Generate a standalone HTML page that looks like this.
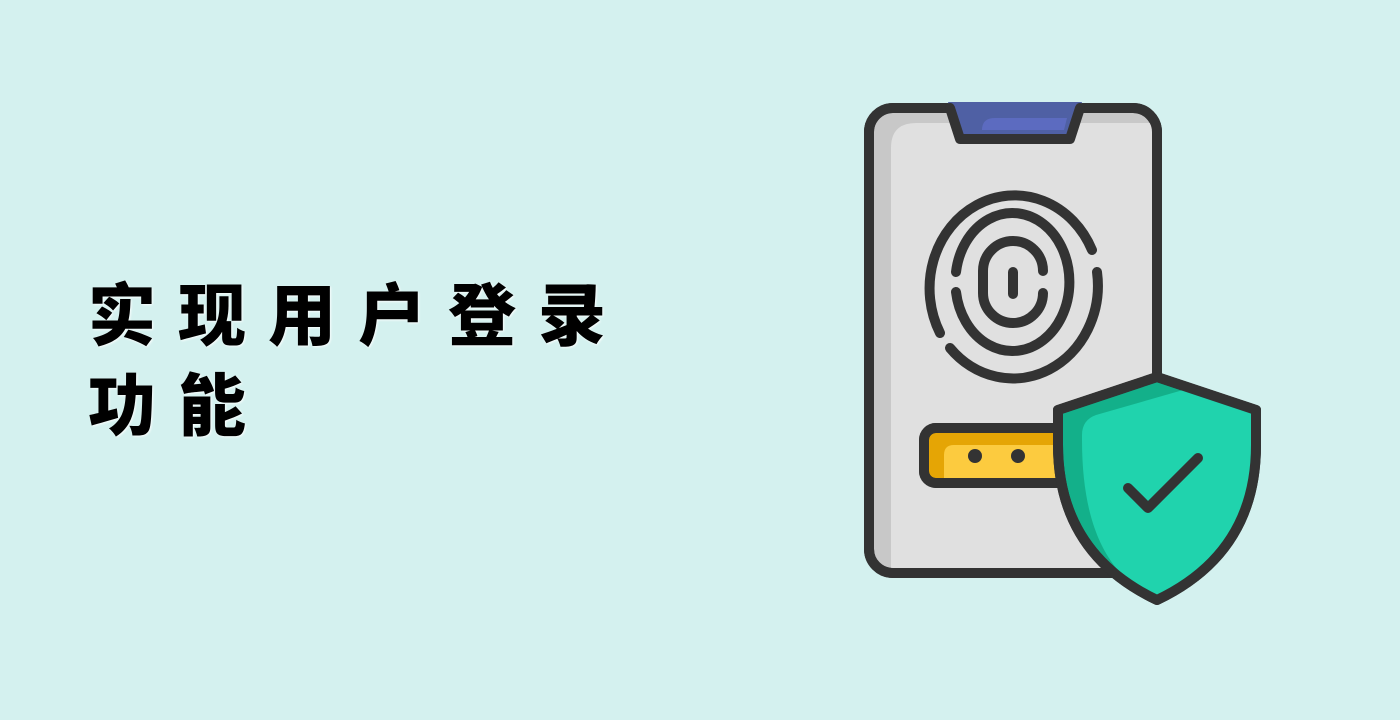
<!DOCTYPE html>
<html><head><meta charset="utf-8"><style>
html,body{margin:0;padding:0}
body{width:1400px;height:720px;background:#d4f1ef;position:relative;overflow:hidden}
.t{position:absolute;left:88px;top:272px;font-family:"Liberation Sans","Noto Sans CJK SC",sans-serif;font-weight:900;font-size:68px;line-height:90px;letter-spacing:22px;color:#000;text-shadow:1px 1px 2px rgba(255,255,255,.9)}
svg{position:absolute;left:0;top:0}
</style></head><body>
<div class="t">实现用户登录<br>功能</div>
<svg width="1400" height="720" viewBox="0 0 1400 720">
<g stroke="#333" stroke-width="10" stroke-linecap="round" stroke-linejoin="round">
<rect x="869" y="108" width="288" height="465" rx="24" fill="#c8c8c8"/>
<path d="M891 573 V148 Q891 123 916 123 H1155 V573 Z" fill="#e0e0e0" stroke="none"/>
<rect x="869" y="108" width="288" height="465" rx="24" fill="none"/>
<path d="M948 102 L959 139 H1071 L1082 102 Z" fill="#4f60a4" stroke="none"/>
<path d="M982 130 Q982 118 995 118 H1067 L1064 130 Z" fill="#5c6bc0" stroke="none"/>
<path d="M950 108 L960 139 H1070 L1080 108" fill="none"/>
<g fill="none">
<path d="M1092 250 A85 93 0 1 0 940 333"/>
<path d="M950 348 A85 93 0 0 0 1097 272"/>
<path d="M956 272 A57 69 0 1 1 956 292"/>
<path d="M1043 271 A30 30 0 0 0 983 271 V293 A30 30 0 0 0 1043 293"/>
<path d="M1013 272 V294"/>
</g>
<rect x="924" y="428" width="150" height="55" rx="12" fill="#e5a505"/>
<path d="M944 478 V455 Q944 445 954 445 H1070 V478 Z" fill="#fccb3f" stroke="none"/>
<rect x="924" y="428" width="150" height="55" rx="12" fill="none"/>
<circle cx="975" cy="456" r="7" fill="#333" stroke="none"/>
<circle cx="1018" cy="456" r="7" fill="#333" stroke="none"/>
<path d="M1157 377 L1256 410 V445 C1256 520 1220 570 1157 600 C1094 570 1058 520 1058 445 V410 Z" fill="#13b08a"/>
<path d="M1190 388 L1256 410 V445 C1256 520 1220 570 1157 600 C1120 582 1082 545 1082 440 V435 Q1082 420 1096 415 Z" fill="#20d3ad" stroke="none"/>
<path d="M1157 377 L1256 410 V445 C1256 520 1220 570 1157 600 C1094 570 1058 520 1058 445 V410 Z" fill="none"/>
<path d="M1128 488 L1148 508 L1198 458" fill="none"/>
</g>
</svg>
</body></html>
